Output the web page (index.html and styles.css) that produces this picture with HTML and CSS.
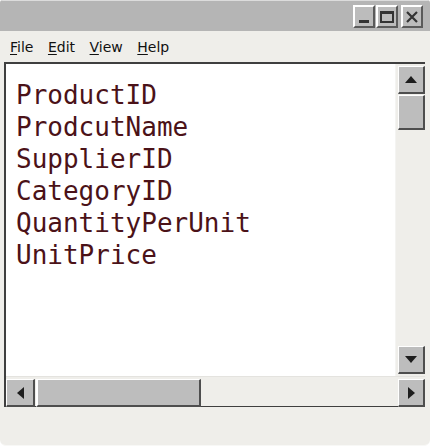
FILE: index.html
```html
<!DOCTYPE html>
<html>
<head>
<meta charset="utf-8">
<link rel="stylesheet" href="styles.css">
</head>
<body>
<div class="window">
  <div class="titlebar">
    <div class="tbtn tmin"><span class="min-glyph"></span></div>
    <div class="tbtn tmax"><span class="max-glyph"></span></div>
    <div class="tbtn">
      <svg width="14" height="14" viewBox="0 0 14 14"><path d="M2 2 L12 12 M12 2 L2 12" stroke="#333" stroke-width="2.2" fill="none"/></svg>
    </div>
  </div>
  <div class="menubar">
    <span class="menu"><u>F</u>ile</span>
    <span class="menu"><u>E</u>dit</span>
    <span class="menu"><u>V</u>iew</span>
    <span class="menu"><u>H</u>elp</span>
  </div>
  <div class="frame">
    <div class="content">
      <div class="line">ProductID</div>
      <div class="line">ProdcutName</div>
      <div class="line">SupplierID</div>
      <div class="line">CategoryID</div>
      <div class="line">QuantityPerUnit</div>
      <div class="line">UnitPrice</div>
    </div>
    <div class="vscroll">
      <div class="sbtn"><span class="tri up"></span></div>
      <div class="vthumb"></div>
      <div class="vtrack"></div>
      <div class="sbtn"><span class="tri down"></span></div>
    </div>
    <div class="hscroll">
      <div class="sbtn hbtn"><span class="tri left"></span></div>
      <div class="hthumb"></div>
      <div class="htrack"></div>
    </div>
    <div class="corner">
      <div class="sbtn"><span class="tri right"></span></div>
    </div>
  </div>
</div>
</body>
</html>
```

FILE: styles.css
```css
html, body {
  margin: 0;
  padding: 0;
  background: #ffffff;
}
.window {
  width: 430px;
  height: 446px;
  box-sizing: border-box;
  background: #efeeea;
  border-radius: 3px 3px 6px 6px;
  border-bottom: 1px solid #f8f8f6;
  display: flex;
  flex-direction: column;
  overflow: hidden;
}
.titlebar {
  height: 31px;
  box-sizing: border-box;
  background: #b5b5b5;
  border-top: 1px solid #dcdcdc;
  display: flex;
  justify-content: flex-end;
  align-items: flex-start;
  padding: 4px 7px 0 0;
}
.tbtn {
  width: 22px;
  height: 23px;
  box-sizing: border-box;
  background: #bcbcbc;
  border-top: 2px solid #ffffff;
  border-left: 2px solid #ffffff;
  border-right: 2px solid #5a5a5a;
  border-bottom: 2px solid #5a5a5a;
  display: flex;
  align-items: center;
  justify-content: center;
}
.tmin {
  margin-right: 1px;
}
.tmax {
  margin-right: 3px;
}
.min-glyph {
  width: 10px;
  height: 3px;
  background: #333;
  margin-top: 9px;
}
.max-glyph {
  width: 14px;
  height: 12px;
  box-sizing: border-box;
  border: 2px solid #333;
  border-top-width: 3px;
}
.menubar {
  height: 31px;
  display: flex;
  align-items: center;
  padding-left: 10px;
  font-family: "DejaVu Sans", sans-serif;
  font-size: 14px;
  color: #111;
}
.menu {
  margin-right: 14.5px;
}
.menu u {
  text-decoration-thickness: 1px;
  text-underline-offset: 2px;
}
.frame {
  margin-left: 4px;
  width: 421px;
  height: 345px;
  box-sizing: border-box;
  border-top: 2px solid #3f3f3f;
  border-left: 2px solid #3f3f3f;
  display: grid;
  grid-template-columns: 1fr 29px;
  grid-template-rows: 1fr 31px;
}
.content {
  background: #ffffff;
  padding: 15px 0 0 10px;
  font-family: "DejaVu Sans Mono", "Liberation Mono", monospace;
  font-size: 26px;
  line-height: 32px;
  color: #4b1218;
  border-right: 1px solid #f4f4f2;
}
.vscroll {
  display: flex;
  flex-direction: column;
  padding: 2px 0 0 2px;
  background: #efeeea;
}
.sbtn {
  height: 28px;
  width: 27px;
  box-sizing: border-box;
  background: #bdbdbd;
  border-top: 1px solid #ffffff;
  border-left: 1px solid #ffffff;
  border-right: 2px solid #4e4e4e;
  border-bottom: 2px solid #4e4e4e;
  display: flex;
  align-items: center;
  justify-content: center;
  flex-shrink: 0;
}
.vthumb {
  height: 35px;
  width: 27px;
  box-sizing: border-box;
  background: #bdbdbd;
  border-top: 1px solid #ffffff;
  border-left: 1px solid #ffffff;
  border-right: 2px solid #4e4e4e;
  border-bottom: 2px solid #4e4e4e;
  margin-top: 1px;
}
.vtrack {
  flex: 1;
}
.vscroll .sbtn:last-child {
  margin-bottom: 2px;
}
.hscroll {
  display: flex;
  padding-top: 2px;
  background: #efeeea;
  border-top: 1px solid #e4e3df;
  border-bottom: 1px solid #3f3f3f;
}
.hbtn {
  width: 29px;
  height: 28px;
}
.hthumb {
  width: 165px;
  height: 28px;
  box-sizing: border-box;
  background: #bdbdbd;
  border-top: 1px solid #ffffff;
  border-left: 2px solid #ffffff;
  border-right: 2px solid #4e4e4e;
  border-bottom: 2px solid #4e4e4e;
  margin-left: 1px;
}
.htrack {
  flex: 1;
}
.corner {
  padding: 2px 0 0 2px;
  border-top: 1px solid #e4e3df;
  border-bottom: 1px solid #3f3f3f;
}
.tri {
  width: 0;
  height: 0;
  border-style: solid;
  border-color: transparent;
}
.tri.up {
  border-width: 0 6px 7px 6px;
  border-bottom-color: #1e1e1e;
}
.tri.down {
  border-width: 7px 6px 0 6px;
  border-top-color: #1e1e1e;
}
.tri.left {
  border-width: 6px 7px 6px 0;
  border-right-color: #1e1e1e;
}
.tri.right {
  border-width: 6px 0 6px 7px;
  border-left-color: #1e1e1e;
}
```
